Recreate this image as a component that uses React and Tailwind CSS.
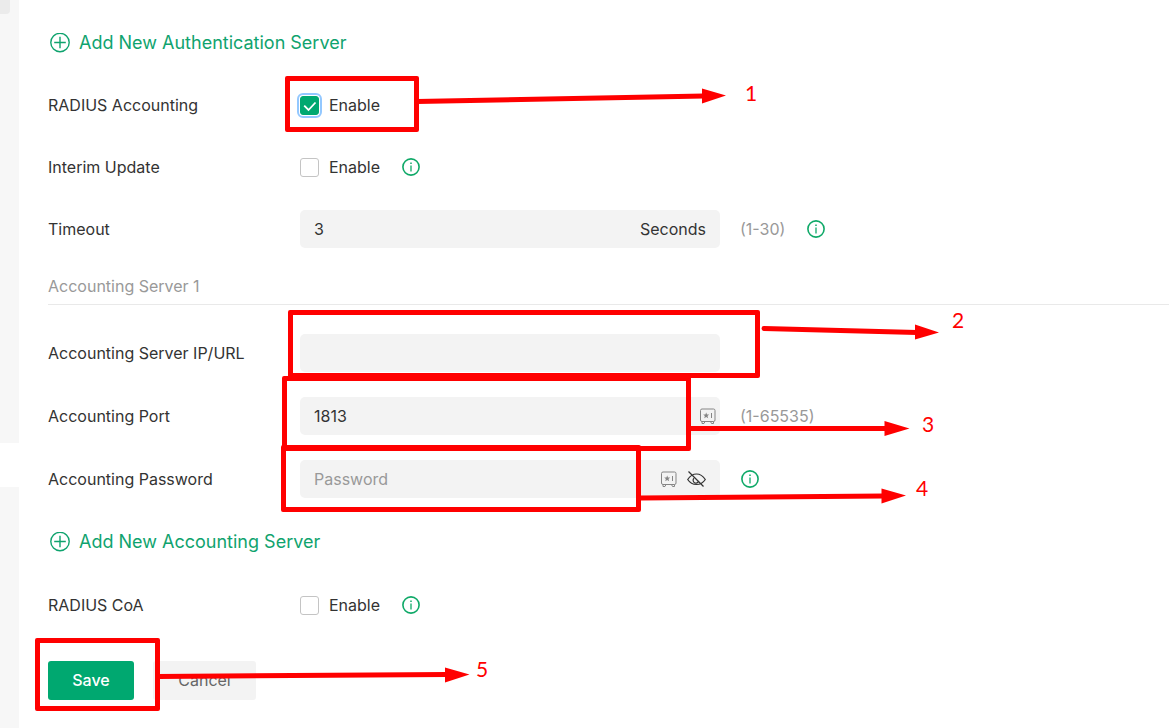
import { useState } from "react";

function PlusCircle() {
  return (
    <svg className="size-5 shrink-0" viewBox="0 0 20 20" fill="none" stroke="currentColor" strokeWidth="1.4" aria-hidden="true">
      <circle cx="10" cy="9.5" r="9.2" />
      <path d="M10 3.7v11.6M4.2 9.5h11.6" />
    </svg>
  );
}

function InfoIcon() {
  return (
    <svg className="size-[18px] shrink-0 text-[#0fa968]" viewBox="0 0 18 18" fill="none" stroke="currentColor" strokeWidth="1.6" aria-hidden="true">
      <circle cx="9" cy="9" r="8.1" />
      <path d="M9 7.4v6" strokeWidth="1.3" />
      <path d="M9 4.6v1.5" strokeWidth="1.5" />
    </svg>
  );
}

function SafeIcon() {
  return (
    <svg className="size-4 shrink-0 text-[#858585]" viewBox="0 0 16 16" fill="none" stroke="currentColor" aria-hidden="true">
      <path d="M2 1h11.500a1.500 1.500 0 0 1 1.500 1.500v9.500a1.500 1.500 0 0 1-1.500 1.500H2A1.500 1.500 0 0 1 .5 12V2.500A1.500 1.500 0 0 1 2 1Z" />
      <path d="M2 13.500v2h2l1-2M13.500 13.500v2h-2l-1-2" />
      <path stroke="none" fill="currentColor" d="m6.200 4.500.8 2h2.200L7.500 7.900l.7 2.300-2-1.300-2 1.300.7-2.300-1.700-1.400h2.200Z" />
      <path d="M11.500 5v5" />
    </svg>
  );
}

function EyeOffIcon() {
  return (
    <svg className="h-4 w-[19px]" viewBox="0 0 19 16" fill="none" stroke="currentColor" strokeWidth="1.2" aria-hidden="true">
      <path d="M0.700 8.500C3 5 5.800 3 9.500 3s6.500 2 8.800 5.500C16 12 13.200 13.500 9.500 13.500S3 12 0.700 8.500Z" />
      <path d="M7 7.200a2.800 2.800 0 1 0 4.600 2.800" />
      <path d="M1.500 0.500 16.500 15.500" />
    </svg>
  );
}

function AddLink({ children }) {
  return (
    <div className="flex h-[38px] items-center">
      <button type="button" className="ml-[2px] flex items-center gap-[9px] text-lg font-normal text-[#0fa36e]">
        <PlusCircle />
        {children}
      </button>
    </div>
  );
}

function Row({ label, htmlFor, children }) {
  return (
    <div className="flex h-[38px] items-center">
      <label htmlFor={htmlFor} className="w-[252px] shrink-0">
        {label}
      </label>
      {children}
    </div>
  );
}

function EnableBox({ id, initial = false }) {
  const [on, setOn] = useState(initial);
  return (
    <label className="flex items-center gap-[10px]">
      <span className="grid">
        <input
          id={id}
          type="checkbox"
          checked={on}
          onChange={(e) => setOn(e.target.checked)}
          className="col-start-1 row-start-1 size-[19px] appearance-none rounded-[3px] border border-[#c4c4c4] bg-white outline-offset-1 outline-[#93c8ff] checked:border-[#00a870] checked:bg-[#00a870] checked:outline-2"
        />
        {on && (
          <svg className="pointer-events-none col-start-1 row-start-1 size-[19px]" viewBox="0 0 19 19" fill="none" stroke="#fff" strokeWidth="1.800" aria-hidden="true">
            <path d="m4.200 9.700 4.300 4.300 7-7.500" />
          </svg>
        )}
      </span>
      Enable
    </label>
  );
}

const field = "flex h-[38px] w-[420px] items-center rounded-[5px] bg-[#f3f3f3] pl-[14px]";
const input = "min-w-0 flex-1 bg-transparent outline-none placeholder:text-[#999]";
const box = "absolute rounded-[2px] border-[5px] border-[#f00]";
const num = "absolute font-[Lato] text-[21px] leading-6 font-normal text-[#f00]";

function Annotations() {
  return (
    <div className="pointer-events-none absolute inset-0 overflow-hidden">
      <div className={`${box} top-[76px] left-[285px] h-[56px] w-[134px]`} />
      <div className={`${box} top-[310px] left-[288px] h-[68px] w-[472px]`} />
      <div className={`${box} top-[376px] left-[282px] h-[75px] w-[409px]`} />
      <div className={`${box} top-[445px] left-[281px] h-[67px] w-[360px]`} />
      <div className={`${box} top-[638px] left-[35px] h-[73px] w-[125px]`} />
      <svg className="absolute top-0 left-0" width="1169" height="728" viewBox="0 0 1169 728" fill="#f00" stroke="#f00" strokeWidth="5" strokeLinecap="round" aria-hidden="true">
        <path d="M417 101.500 704 96M764 328.500 917 332.500M690 428.500H887M640 498 884 496M158 676.500 447 674.500" />
        <path stroke="none" d="M702 88.500v15L726 95.500ZM915 324.500v15L939 332.500ZM884.500 421v15L909.500 428.500ZM881.500 488.500v15L906 495.500ZM445 667.500v15L469.500 674.500Z" />
      </svg>
      <span className={`${num} top-[81px] left-[745px]`}>1</span>
      <span className={`${num} top-[308px] left-[952px]`}>2</span>
      <span className={`${num} top-[412px] left-[922px]`}>3</span>
      <span className={`${num} top-[476px] left-[916px]`}>4</span>
      <span className={`${num} top-[657px] left-[476px]`}>5</span>
    </div>
  );
}

export default function App() {
  return (
    <div className="relative flex min-h-screen bg-white font-['Inter',sans-serif] text-base font-normal text-[#333]">
      <aside className="flex w-[19px] shrink-0 flex-col gap-11">
        <div className="h-[443px] bg-[#f7f7f7]">
          <div className="h-[14px] w-[10px] rounded-br-[4px] bg-[#ebebeb]" />
        </div>
        <div className="flex-1 bg-[#f7f7f7]" />
      </aside>

      <main className="min-w-0 flex-1 pt-6 pb-7 pl-[29px]">
        <form onSubmit={(e) => e.preventDefault()}>
          <div className="flex flex-col gap-6">
            <AddLink>Add New Authentication Server</AddLink>
            <Row label="RADIUS Accounting" htmlFor="accounting">
              <EnableBox id="accounting" initial />
            </Row>
            <Row label="Interim Update" htmlFor="interim">
              <EnableBox id="interim" />
              <span className="ml-[22px]"><InfoIcon /></span>
            </Row>
            <Row label="Timeout" htmlFor="timeout">
              <div className={`${field} pr-[14px]`}>
                <input id="timeout" className={input} defaultValue="3" />
                <span>Seconds</span>
              </div>
              <span className="ml-5 text-[#999]">(1-30)</span>
              <span className="ml-[22px]"><InfoIcon /></span>
            </Row>
          </div>

          <h2 className="mt-[26px] mb-[29px] border-b border-[#e9e9e9] pb-[6px] font-normal text-[#999]">
            Accounting Server 1
          </h2>

          <div className="flex flex-col gap-[25px]">
            <Row label="Accounting Server IP/URL" htmlFor="server">
              <div className={field}>
                <input id="server" className={input} />
              </div>
            </Row>
            <Row label="Accounting Port" htmlFor="port">
              <div className={`${field} pr-[4px]`}>
                <input id="port" className={input} defaultValue="1813" />
                <SafeIcon />
              </div>
              <span className="ml-5 text-[#999]">(1-65535)</span>
            </Row>
            <Row label="Accounting Password" htmlFor="password">
              <div className={`${field} pr-[14px]`}>
                <input id="password" type="password" className={input} placeholder="Password" />
                <SafeIcon />
                <button type="button" aria-label="Show password" className="ml-[10px]">
                  <EyeOffIcon />
                </button>
              </div>
              <span className="ml-[21px]"><InfoIcon /></span>
            </Row>
            <AddLink>Add New Accounting Server</AddLink>
            <Row label="RADIUS CoA" htmlFor="coa">
              <EnableBox id="coa" />
              <span className="ml-[22px]"><InfoIcon /></span>
            </Row>
          </div>

          <div className="mt-[37px] flex gap-[19px]">
            <button type="submit" className="h-[39px] w-[86px] rounded-[3px] bg-[#00a870] pb-[2px] font-medium text-white">
              Save
            </button>
            <button type="button" className="h-[39px] w-[103px] rounded-[3px] bg-[#f3f3f3] pb-[2px] font-normal text-[#666]">
              Cancel
            </button>
          </div>
        </form>
      </main>
      <Annotations />
    </div>
  );
}
